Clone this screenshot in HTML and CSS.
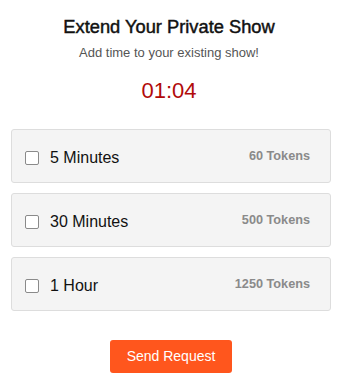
FILE: index.html
```html
<!DOCTYPE html>
<html lang="en">
<head>
<meta charset="utf-8">
<title>Extend Your Private Show</title>
<link rel="stylesheet" href="styles.css">
</head>
<body>
<div class="page">
  <header class="head">
    <h1 class="title">Extend Your Private Show</h1>
    <p class="subtitle">Add time to your existing show!</p>
    <div class="timer">01:04</div>
  </header>
  <div class="body">
    <ul class="options">
      <li class="option">
        <span class="check"></span>
        <span class="label">5 Minutes</span>
        <span class="price">60 Tokens</span>
      </li>
      <li class="option">
        <span class="check"></span>
        <span class="label">30 Minutes</span>
        <span class="price">500 Tokens</span>
      </li>
      <li class="option">
        <span class="check"></span>
        <span class="label">1 Hour</span>
        <span class="price">1250 Tokens</span>
      </li>
    </ul>
    <div class="actions">
      <button class="send" type="button">Send Request</button>
    </div>
  </div>
</div>
</body>
</html>
```

FILE: styles.css
```css
* {
  box-sizing: border-box;
}

html, body {
  margin: 0;
  padding: 0;
  background: #ffffff;
}

body {
  font-family: "Liberation Sans", Arial, Helvetica, sans-serif;
  color: #111111;
}

.page {
  width: 338px;
  height: 388px;
  display: flex;
  flex-direction: column;
}

.head {
  display: flex;
  flex-direction: column;
  align-items: center;
  padding-top: 17px;
}

.title {
  margin: 0;
  font-size: 18.3px;
  line-height: 20px;
  font-weight: 400;
  -webkit-text-stroke: 0.45px #111111;
  color: #111111;
}

.subtitle {
  margin: 8px 0 0;
  font-size: 13px;
  line-height: 16px;
  color: #555555;
}

.timer {
  margin-top: 17px;
  font-size: 22px;
  line-height: 26px;
  color: #b10a0a;
}

.body {
  padding: 0 7px 0 11px;
  margin-top: 25px;
}

.options {
  list-style: none;
  margin: 0;
  padding: 0;
  display: flex;
  flex-direction: column;
  gap: 10px;
}

.option {
  height: 54px;
  display: flex;
  align-items: center;
  padding: 4px 20px 0 13px;
  background: #f4f4f4;
  border: 1px solid #dddddd;
  border-radius: 3px;
}

.check {
  width: 14px;
  height: 14px;
  border: 1.5px solid #8a8a8a;
  border-radius: 2px;
  background: #ffffff;
  flex: none;
}

.label {
  margin-left: 11px;
  font-size: 16px;
  line-height: 18px;
  color: #111111;
  flex: 1;
}

.price {
  font-size: 12.7px;
  line-height: 15px;
  font-weight: 700;
  color: #8a8a8a;
  margin-bottom: 3px;
}

.actions {
  display: flex;
  justify-content: center;
  margin-top: 29px;
}

.send {
  height: 33px;
  padding: 0 16.5px;
  border: none;
  border-radius: 3px;
  background: #ff561d;
  color: #ffffff;
  font-family: "Liberation Sans", Arial, Helvetica, sans-serif;
  font-size: 14px;
  line-height: 33px;
}
```
